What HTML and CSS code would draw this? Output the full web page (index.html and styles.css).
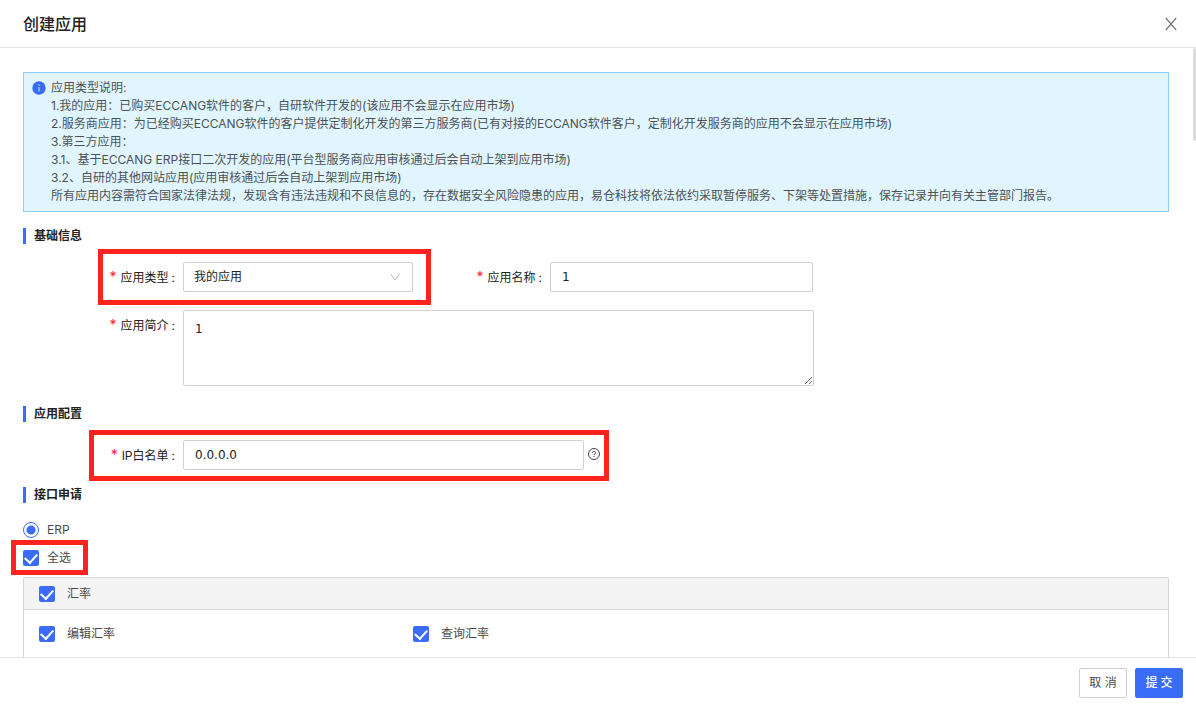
FILE: index.html
```html
<!DOCTYPE html>
<html lang="zh-CN">
<head>
<meta charset="utf-8">
<title>创建应用</title>
<link rel="stylesheet" href="styles.css">
</head>
<body>
<div class="dialog">
  <header class="dialog-header">
    <h1 class="dialog-title">创建应用</h1>
    <button class="close" type="button" aria-label="关闭">
      <svg width="14" height="14" viewBox="0 0 14 14"><path d="M1.8 1 L12.2 13 M12.2 1 L1.8 13"/></svg>
    </button>
  </header>

  <main class="dialog-body">
    <div class="scroll-thumb"></div>
    <div class="notice">
      <svg class="notice-icon" width="14" height="14" viewBox="0 0 14 14"><circle cx="7" cy="7" r="6.7" fill="#3b6cf8"/><path d="M7 6v4.4" stroke="#b9d3fd" stroke-width="1.2"/><circle cx="7" cy="4" r=".8" fill="#b9d3fd"/></svg>
      <div class="notice-text">
        <p>应用类型说明:</p>
        <p>1.我的应用：已购买ECCANG软件的客户，自研软件开发的(该应用不会显示在应用市场)</p>
        <p>2.服务商应用：为已经购买ECCANG软件的客户提供定制化开发的第三方服务商(已有对接的ECCANG软件客户，定制化开发服务商的应用不会显示在应用市场)</p>
        <p>3.第三方应用：</p>
        <p>3.1、基于ECCANG ERP接口二次开发的应用(平台型服务商应用审核通过后会自动上架到应用市场)</p>
        <p>3.2、自研的其他网站应用(应用审核通过后会自动上架到应用市场)</p>
        <p>所有应用内容需符合国家法律法规，发现含有违法违规和不良信息的，存在数据安全风险隐患的应用，易仓科技将依法依约采取暂停服务、下架等处置措施，保存记录并向有关主管部门报告。</p>
      </div>
    </div>

    <h2 class="section-title">基础信息</h2>
    <div class="form-row">
      <div class="field field-type">
        <label class="label" for="app-type">应用类型</label>
        <div class="select-wrap">
          <select class="control" id="app-type"><option>我的应用</option></select>
          <svg class="arrow" width="12" height="12" viewBox="0 0 12 12"><path d="M1.5 3 L6 9 L10.5 3"/></svg>
        </div>
        <span class="mark mark-type"></span>
      </div>
      <div class="field field-name">
        <label class="label" for="app-name">应用名称</label>
        <input class="control" id="app-name" type="text" value="1">
      </div>
    </div>
    <div class="form-row">
      <div class="field field-wide">
        <label class="label" for="app-desc">应用简介</label>
        <textarea class="control area" id="app-desc">1</textarea>
      </div>
    </div>

    <h2 class="section-title">应用配置</h2>
    <div class="form-row">
      <div class="field field-ip">
        <label class="label" for="app-ip">IP白名单</label>
        <input class="control" id="app-ip" type="text" value="0.0.0.0">
        <svg class="help" width="12" height="12" viewBox="0 0 12 12"><circle cx="6" cy="6" r="5.5"/><path d="M4.4 4.9c0-2.1 3.2-2.1 3.2-.1 0 1.1-1.6 1.1-1.6 2.3M6 8v1"/></svg>
        <span class="mark mark-ip"></span>
      </div>
    </div>

    <h2 class="section-title">接口申请</h2>
    <div class="scope">
      <label class="choice"><input class="radio" type="radio" name="scope" checked>ERP</label>
      <label class="choice choice-all"><input class="check" type="checkbox" checked>全选<span class="mark mark-all"></span></label>
    </div>
    <section class="panel">
      <div class="panel-head">
        <label class="choice"><input class="check" type="checkbox" checked>汇率</label>
      </div>
      <div class="panel-body">
        <label class="choice"><input class="check" type="checkbox" checked>编辑汇率</label>
        <label class="choice"><input class="check" type="checkbox" checked>查询汇率</label>
      </div>
    </section>
  </main>

  <footer class="dialog-footer">
    <button class="button" type="button">取 消</button>
    <button class="button primary" type="button">提 交</button>
  </footer>
</div>
</body>
</html>
```
FILE: styles.css
```css
* { box-sizing: border-box; }

body {
  margin: 0;
  background: #fff;
  color: #222;
  font: 12px/18px Inter, "Noto Sans CJK SC", sans-serif;
}

h1, h2, p { margin: 0; }

.dialog {
  display: flex;
  flex-direction: column;
  height: 100vh;
}

.dialog-header {
  flex: none;
  display: flex;
  align-items: center;
  justify-content: space-between;
  height: 48px;
  padding: 0 18px 0 23px;
  border-bottom: 1px solid #e3e3e3;
}

.dialog-title {
  font-size: 16px;
  line-height: 24px;
  font-weight: 500;
}

.close {
  display: flex;
  padding: 0;
  border: 0;
  background: none;
}

.close svg {
  fill: none;
  stroke: #777;
  stroke-width: 1.2;
}

.dialog-body {
  position: relative;
  flex: 1;
  min-height: 0;
  overflow: hidden;
  padding: 24px 27px 0 23px;
}

.scroll-thumb {
  position: absolute;
  top: 0;
  right: 0;
  width: 3px;
  height: 93px;
  border-radius: 3px 0 0 3px;
  background: #dcdcdc;
}

.notice {
  display: flex;
  gap: 5px;
  padding: 6px 8px;
  border: 1px solid #8ccefc;
  background: #e1f5fe;
  color: #4a5256;
}

.notice-icon {
  flex: none;
  margin-top: 2px;
}

.section-title {
  margin-top: 16px;
  padding-left: 8px;
  border-left: 3px solid #3b6cf8;
  font-size: 12px;
  line-height: 16px;
  font-weight: 700;
}

.form-row {
  display: flex;
  max-width: 791px;
  margin-top: 18px;
}

.form-row + .form-row { margin-top: 17px; }

.form-row + .section-title { margin-top: 20px; }

.form-row:has(.field-ip) + .section-title { margin-top: 16px; }

.field {
  position: relative;
  display: flex;
  align-items: flex-start;
}

.field-type { flex: 0 1 390px; }
.field-name { flex: 0 1 400px; }
.field-wide { flex: 1; }
.field-ip { flex: 0 1 577px; }

.label {
  flex: none;
  width: 160px;
  padding-right: 8px;
  line-height: 30px;
  text-align: right;
}

.field-name .label { width: 137px; }

.label::before {
  content: "*";
  margin-right: 4px;
  color: #f5222d;
  font-size: 14px;
}

.label::after {
  content: ":";
  margin-left: 3px;
}

.control {
  flex: 1;
  min-width: 0;
  width: 100%;
  height: 30px;
  padding: 0 11px;
  border: 1px solid #d0d0d0;
  border-radius: 2px;
  background: #fff;
  color: #222;
  font: 12px/18px "DejaVu Sans", "Noto Sans CJK SC", sans-serif;
}

.area {
  display: block;
  height: 76px;
  padding-top: 9px;
  resize: vertical;
}

.select-wrap {
  position: relative;
  flex: 1;
}

select.control {
  display: block;
  appearance: none;
  padding: 0 10px;
  font-family: Inter, "Noto Sans CJK SC", sans-serif;
}

.arrow {
  position: absolute;
  top: 9px;
  right: 12px;
  fill: none;
  stroke: #bbb;
  pointer-events: none;
}

.help {
  flex: none;
  margin: 8px 0 0 4px;
  fill: none;
  stroke: #444;
}

/* Highlight frames drawn over the form */
.mark {
  position: absolute;
  border: 5px solid #ff231f;
  pointer-events: none;
}

.mark-type { inset: -13px -18px -12px 75px; }
.mark-ip { inset: -10px -9px -10px 66px; }
.mark-all { inset: -10px -17px -9px -12px; }

.scope {
  display: flex;
  flex-direction: column;
  align-items: flex-start;
  gap: 12px;
  margin-top: 19px;
}

.choice {
  position: relative;
  display: flex;
  align-items: center;
  gap: 8px;
  line-height: 16px;
  color: #4a4a4a;
}

.radio,
.check {
  flex: none;
  appearance: none;
  width: 16px;
  height: 16px;
  margin: 0;
}

.radio {
  border: 1px solid #3b6cf8;
  border-radius: 50%;
  background: radial-gradient(circle, #3b6cf8 4px, #fff 5px);
}

.check {
  display: grid;
  place-items: center;
  border-radius: 2px;
  background: #3b6cf8;
}

.check::before {
  content: "";
  width: 6px;
  height: 10px;
  border: solid #fff;
  border-width: 0 2px 2px 0;
  transform: translateY(-1px) rotate(42deg);
}

.panel {
  margin-top: 11px;
  border: 1px solid #d5d5d5;
  border-radius: 2px;
}

.panel .choice { gap: 12px; }

.panel-head {
  padding: 8px 15px 7px;
  border-bottom: 1px solid #d5d5d5;
  background: #f4f4f4;
}

.panel-body {
  display: grid;
  grid-template-columns: repeat(3, 1fr);
  padding: 16px 7px 16px 15px;
}

.dialog-footer {
  flex: none;
  display: flex;
  justify-content: flex-end;
  gap: 8px;
  height: 50px;
  padding: 10px 13px;
  border-top: 1px solid #e3e3e3;
}

.button {
  width: 48px;
  height: 30px;
  padding: 0;
  border: 1px solid #d0d0d0;
  border-radius: 2px;
  background: #fff;
  color: #4a4a4a;
  font: inherit;
}

.primary {
  border-color: #3b6cf8;
  background: #3b6cf8;
  color: #fff;
  font-weight: 500;
}
```
